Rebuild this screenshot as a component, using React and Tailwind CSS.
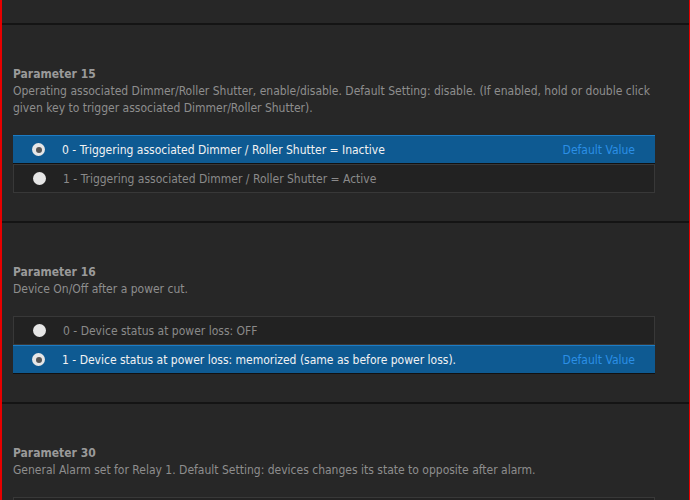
import React, { useState } from 'react';

const params = [
  {
    id: 15,
    description:
      'Operating associated Dimmer/Roller Shutter, enable/disable. Default Setting: disable. (If enabled, hold or double click given key to trigger associated Dimmer/Roller Shutter).',
    options: [
      { value: 0, label: 'Triggering associated Dimmer / Roller Shutter = Inactive' },
      { value: 1, label: 'Triggering associated Dimmer / Roller Shutter = Active' },
    ],
    defaultValue: 0,
  },
  {
    id: 16,
    description: 'Device On/Off after a power cut.',
    options: [
      { value: 0, label: 'Device status at power loss: OFF' },
      { value: 1, label: 'Device status at power loss: memorized (same as before power loss).' },
    ],
    defaultValue: 1,
  },
  {
    id: 30,
    description:
      'General Alarm set for Relay 1. Default Setting: devices changes its state to opposite after alarm.',
    options: [
      { value: 0, label: 'DEACTIVATED - Device does not respond to alarm data frames' },
      { value: 1, label: 'ALARM RELAY ON - Relay will turn ON upon receipt of alarm frame' },
    ],
    defaultValue: 2,
  },
];

const Radio = ({ checked }) => (
  <span className="flex items-center justify-center w-[13px] h-[13px] rounded-full bg-[#e6e6e6] shrink-0">
    {checked && <span className="w-[6px] h-[6px] rounded-full bg-[#555]" />}
  </span>
);

const OptionRow = ({ option, selected, isDefault, onSelect }) => (
  <div
    onClick={onSelect}
    className={
      selected
        ? 'flex items-center h-[29px] pl-[19px] pr-[20px] bg-[#0e5a92] border-t border-[#1d7cc4] border-b border-b-[#111]'
        : 'flex items-center h-[29px] pl-[19px] pr-[20px] bg-[#222222] border border-[#383838]'
    }
  >
    <Radio checked={selected} />
    <span className={selected ? 'ml-[17px] text-[#f2f2f2]' : 'ml-[17px] text-[#8a8a8a]'}>
      {option.value} - {option.label}
    </span>
    {isDefault && <span className="ml-auto text-[#2b8fe6]">Default Value</span>}
  </div>
);

const ParameterSection = ({ param }) => {
  const [value, setValue] = useState(param.defaultValue);
  return (
    <section className="border-t-2 border-[#141414] pt-[40px] pb-[28px] pl-[11px] pr-[34px]">
      <h3 className="font-bold text-[#9a9a9a] leading-[18px]">Parameter {param.id}</h3>
      <p className="text-[#8e8e8e] leading-[17px]">{param.description}</p>
      <div className="mt-[18px]">
        {param.options.map((opt) => (
          <OptionRow
            key={opt.value}
            option={opt}
            selected={value === opt.value}
            isDefault={param.defaultValue === opt.value}
            onSelect={() => setValue(opt.value)}
          />
        ))}
      </div>
    </section>
  );
};

export default function App() {
  return (
    <div
      className="h-[500px] overflow-hidden bg-[#272727] border-l-2 border-r border-[#e60000] text-[12px]"
      style={{ fontFamily: '"DejaVu Sans Condensed", "DejaVu Sans", sans-serif' }}
    >
      <div className="h-[23px]" />
      {params.map((p) => (
        <ParameterSection key={p.id} param={p} />
      ))}
    </div>
  );
}
